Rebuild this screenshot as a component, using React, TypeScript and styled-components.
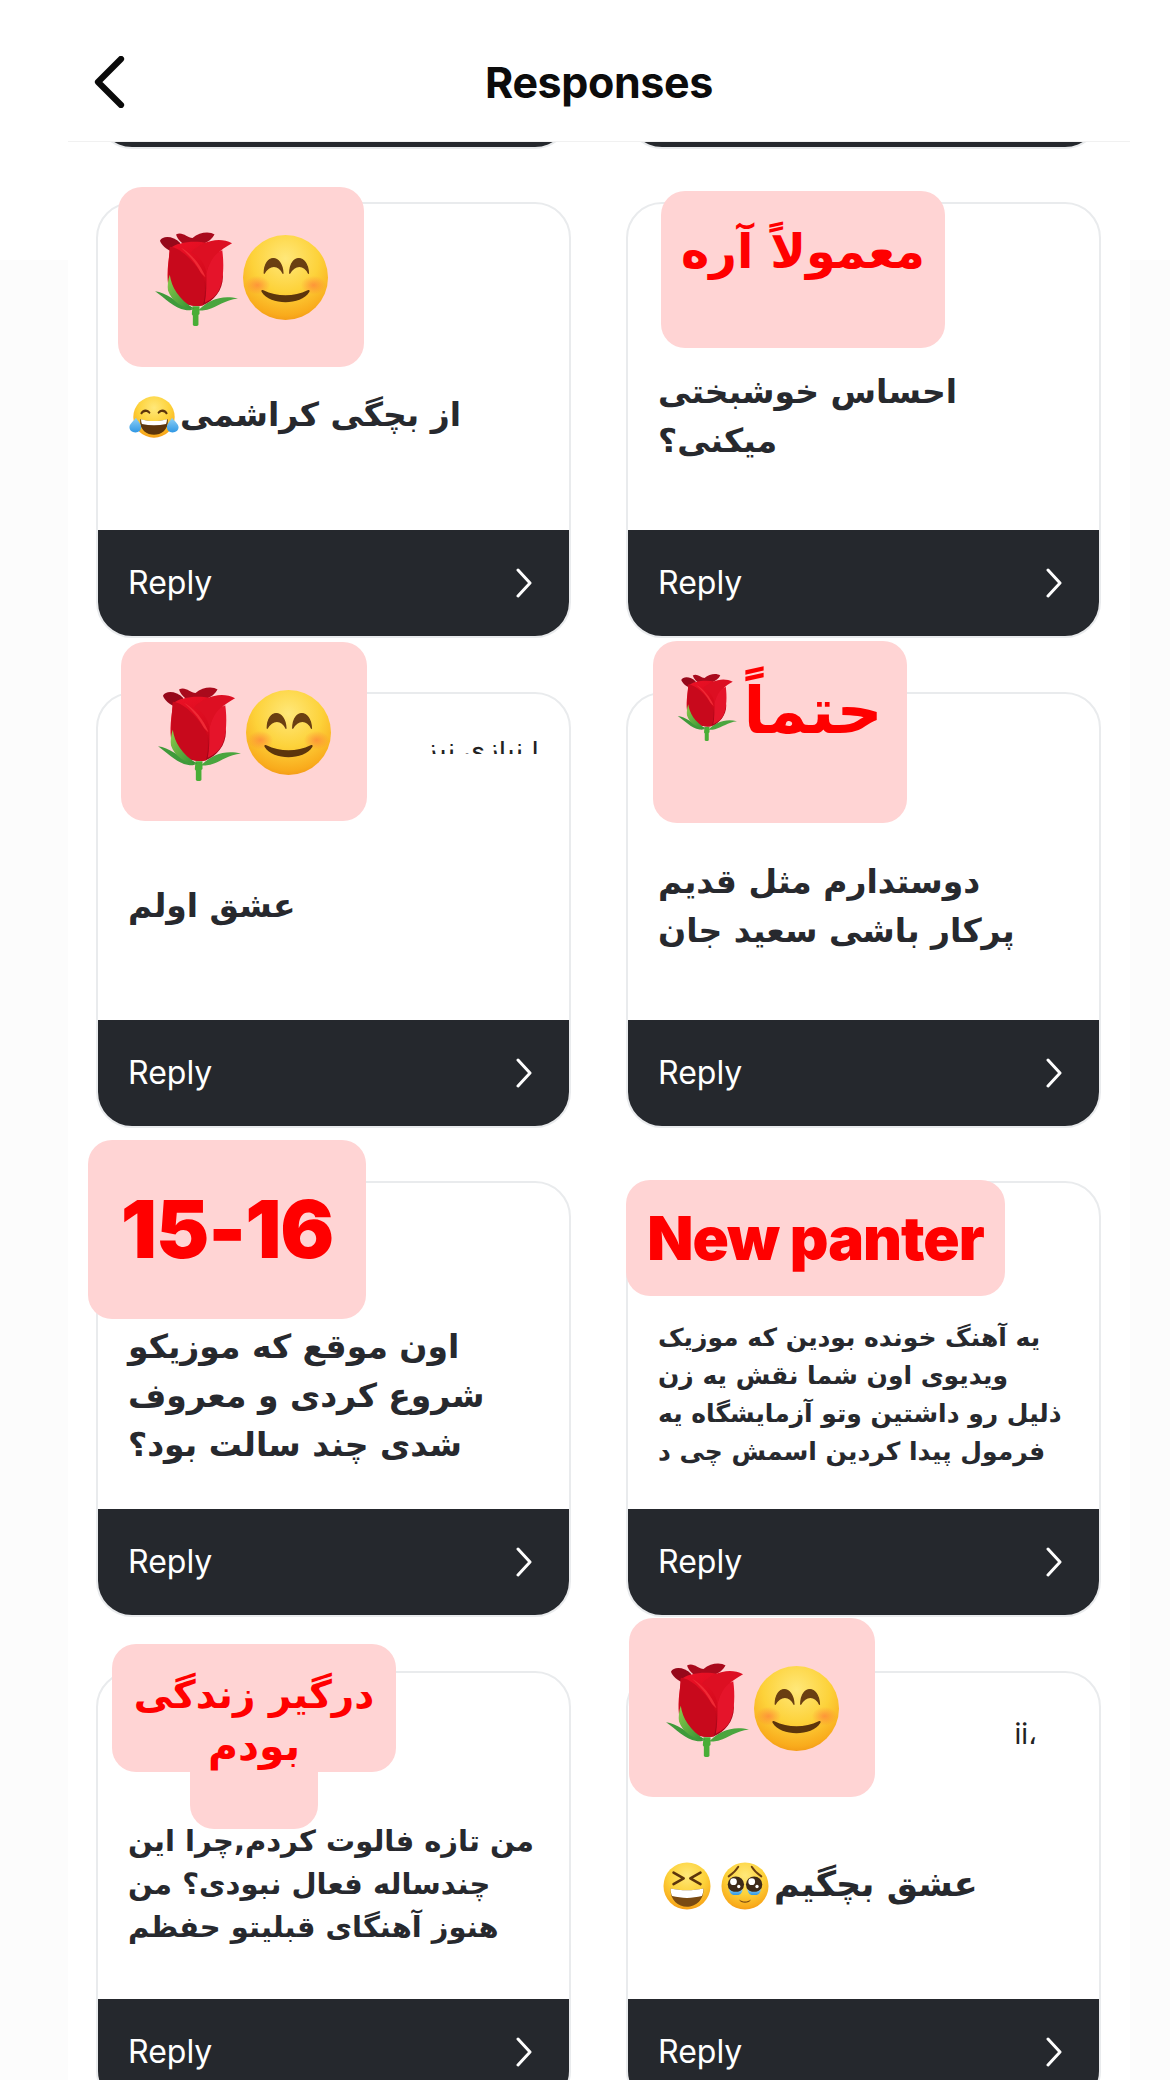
import React from "react";
import styled, { createGlobalStyle } from "styled-components";

const Global = createGlobalStyle`
  html, body { margin: 0; padding: 0; background: #fff; }
  body { font-family: "Inter", "DejaVu Sans", sans-serif; }
`;

const Page = styled.div`
  width: 1170px;
  height: 2080px;
  overflow: hidden;
  background: linear-gradient(#fff 260px, #fcfcfc 260px);
`;

const Column = styled.main`
  margin: 0 40px 0 68px;
  background: #fff;
  height: 2080px;
`;

const Header = styled.header`
  height: 141px;
  box-sizing: content-box;
  display: grid;
  grid-template-columns: 1fr auto 1fr;
  align-items: center;
  padding: 0 26px;
  border-bottom: 1px solid #f1f1f1;
  background: #fff;
  position: relative;
  z-index: 3;
`;

const BackIcon = styled.svg`
  width: 31px;
  height: 52px;
  fill: none;
  stroke: #0a0a0a;
  stroke-width: 6.2;
  stroke-linecap: round;
  stroke-linejoin: round;
  margin-top: 23px;
`;

const Title = styled.h1`
  margin: 23px 0 0;
  font: 700 43px/1 "Inter", sans-serif;
  letter-spacing: -0.4px;
  color: #0c0c0c;
`;

const Scroller = styled.div`
  height: 1938px;
  overflow: hidden;
`;

const Grid = styled.div`
  display: grid;
  grid-template-columns: 475px 475px;
  grid-auto-rows: 436px;
  column-gap: 55px;
  row-gap: 53.5px;
  padding: 0 0 0 28px;
  margin-top: -429.5px;
`;

const Card = styled.article`
  position: relative;
  display: flex;
  flex-direction: column;
  box-sizing: border-box;
  background: #fff;
  border: 2px solid #e9ebed;
  border-radius: 36px;
`;

const Body = styled.div`
  flex: 1;
  display: flex;
  align-items: center;
  padding: 98px 30px 0;
  min-height: 0;
`;

const Question = styled.p<{ $size: number; $line: number }>`
  margin: 0;
  width: 100%;
  text-align: left;
  font-family: "DejaVu Sans", sans-serif;
  font-weight: 700;
  font-size: ${(p) => p.$size}px;
  line-height: ${(p) => p.$line}px;
  color: #27292e;
`;

const Line = styled.span`
  display: block;
  white-space: nowrap;
`;

const Footer = styled.div`
  height: 106px;
  flex: none;
  display: flex;
  align-items: center;
  justify-content: space-between;
  padding: 0 36px 0 30px;
  background: #25282d;
  border-radius: 0 0 34px 34px;
`;

const ReplyLabel = styled.span`
  font: 400 32px/1 "Inter", sans-serif;
  color: #fff;
`;

const Chevron = styled.svg`
  width: 18px;
  height: 30px;
  fill: none;
  stroke: #fff;
  stroke-width: 3;
  stroke-linecap: round;
  stroke-linejoin: round;
`;

const Sticker = styled.div<{ $x: number; $y: number; $w: number; $h: number }>`
  position: absolute;
  left: ${(p) => p.$x}px;
  top: ${(p) => p.$y}px;
  width: ${(p) => p.$w}px;
  height: ${(p) => p.$h}px;
  background: #ffd4d4;
  border-radius: 24px;
  z-index: 2;
`;

const EmojiSticker = styled(Sticker)`
  display: flex;
  justify-content: center;
  align-items: flex-start;
  gap: 5px;
  padding-top: 44px;
  box-sizing: border-box;
`;

const TextSticker = styled(Sticker)<{ $top: number; $size: number; $latin?: boolean }>`
  box-sizing: border-box;
  padding-top: ${(p) => p.$top}px;
  text-align: center;
  color: #ff0000;
  white-space: nowrap;
  font-family: ${(p) => (p.$latin ? '"Inter", sans-serif' : '"DejaVu Sans", sans-serif')};
  font-weight: ${(p) => (p.$latin ? 900 : 700)};
  font-size: ${(p) => p.$size}px;
  line-height: 1;
  letter-spacing: ${(p) => (p.$latin ? "-1px" : "0")};
`;

const RoseTextSticker = styled(TextSticker)`
  display: flex;
  justify-content: center;
  align-items: flex-start;
  gap: 6px;
`;

const RoseSlot = styled.span`
  display: flex;
  margin-top: -6px;
`;

const StackedSticker = styled.div`
  position: absolute;
  left: 14px;
  top: -29px;
  width: 284px;
  z-index: 2;
  display: flex;
  flex-direction: column;
  align-items: center;
  color: #ff0000;
  font: 700 39px/40px "DejaVu Sans", sans-serif;
  white-space: nowrap;
`;

const StackedLineOne = styled.div`
  width: 284px;
  height: 128px;
  box-sizing: border-box;
  padding-top: 31px;
  text-align: center;
  background: #ffd4d4;
  border-radius: 24px;
`;

const StackedLineTwo = styled.div`
  width: 128px;
  height: 103px;
  margin-top: -46px;
  font-size: 41px;
  text-align: center;
  background: #ffd4d4;
  border-radius: 0 0 24px 24px;
`;

const Leftover = styled.div<{ $x: number; $y: number; $w: number; $h: number }>`
  position: absolute;
  left: ${(p) => p.$x}px;
  top: ${(p) => p.$y}px;
  width: ${(p) => p.$w}px;
  height: ${(p) => p.$h}px;
  overflow: hidden;
  display: flex;
  justify-content: flex-end;
  align-items: flex-start;
  font: 400 28px/38px "Inter", "DejaVu Sans", sans-serif;
  color: #222;
  white-space: nowrap;
`;

const TailClip = styled.span<{ $lift: number }>`
  margin-top: ${(p) => -p.$lift}px;
`;

const Defs = styled.svg`
  position: absolute;
  width: 0;
  height: 0;
`;

const InlineEmoji = styled.svg<{ $size: number; $gap?: number }>`
  width: ${(p) => p.$size}px;
  height: ${(p) => p.$size}px;
  vertical-align: middle;
  margin: 0 ${(p) => p.$gap ?? 1}px;
  overflow: visible;
`;

const RoseSvg = styled.svg<{ $w: number }>`
  width: ${(p) => p.$w}px;
  height: ${(p) => (p.$w * 275) / 240}px;
  flex: none;
`;

const SmileSvg = styled.svg<{ $size: number }>`
  width: ${(p) => p.$size}px;
  height: ${(p) => p.$size}px;
  flex: none;
  margin-top: 4px;
`;

/* Shared gradients for the hand-drawn emoji */
const SharedGradients = () => (
  <Defs aria-hidden="true">
    <defs>
      <radialGradient id="faceFill" cx="50%" cy="28%" r="78%">
        <stop offset="0%" stopColor="#ffe87a" />
        <stop offset="50%" stopColor="#fdd23a" />
        <stop offset="85%" stopColor="#f9ab1c" />
        <stop offset="100%" stopColor="#ef8f14" />
      </radialGradient>
      <radialGradient id="blush">
        <stop offset="0%" stopColor="#ff7a3c" stopOpacity="0.65" />
        <stop offset="100%" stopColor="#ff7a3c" stopOpacity="0" />
      </radialGradient>
      <linearGradient id="budFill" x1="0" y1="0" x2="0.4" y2="1">
        <stop offset="0%" stopColor="#ee1126" />
        <stop offset="70%" stopColor="#d30a1c" />
        <stop offset="100%" stopColor="#a00618" />
      </linearGradient>
      <linearGradient id="calyxFill" x1="0" y1="0" x2="1" y2="1">
        <stop offset="0%" stopColor="#8ecb4c" />
        <stop offset="100%" stopColor="#2f8f32" />
      </linearGradient>
      <linearGradient id="tearFill" x1="0" y1="0" x2="0" y2="1">
        <stop offset="0%" stopColor="#8fd0f6" />
        <stop offset="100%" stopColor="#2f97e4" />
      </linearGradient>
    </defs>
  </Defs>
);

const Rose = ({ width = 84 }: { width?: number }) => (
  <RoseSvg $w={width} viewBox="55 40 240 275" aria-hidden="true">
    <path d="M165 255h20v22l-3 3v28c0 5-16 5-16 0v-26l-3-4z" fill="#49ad36" />
    <path d="M58 212c30 2 62 32 107 50 4 2-8 6-20 4-34-6-58-34-87-54z" fill="#3f9a3a" />
    <path d="M295 233c-45-12-85 4-112 32-3 3 12 3 24 0 30-8 50-28 88-32z" fill="#4aa53e" />
    <path d="M72 68c8-16 38-14 58 6l-8 32C100 98 78 86 72 68z" fill="#96081a" />
    <path d="M118 50c17-10 32 9 47 10 20-18 50-20 63-10-13 25-48 36-78 36-15-10-28-22-32-36z" fill="#a90a1c" />
    <path d="M95 190c-5-40 5-80 5-100 30-25 100-25 140-5l12 85c0 40-27 70-57 82-25 6-65-2-85-27z" fill="url(#budFill)" />
    <path d="M160 102c30-32 80-47 118-27-28 15-63 40-73 85-5-30-25-50-45-58z" fill="#dd0f22" />
    <path d="M100 85c32 2 72 45 95 85 10 30 5 65 0 82-35 10-75-12-95-52-10-40 0-90 0-115z" fill="#c8091c" />
    <path d="M132 88c28 14 58 50 70 84-4-3-10-8-14-14-14-28-36-52-56-70z" fill="#ef2a35" />
    <path d="M205 160c10-40 30-60 45-65 5 35 5 85-10 115-10 20-30 30-40 35 5-25 5-55 5-85z" fill="#e5142a" />
    <path d="M100 165c5 35 25 70 70 97-35 0-65-22-75-52-2-12 0-30 5-45z" fill="url(#calyxFill)" />
  </RoseSvg>
);

const Smile = () => (
  <SmileSvg $size={85} viewBox="0 0 100 100" aria-hidden="true">
    <circle cx="50" cy="50" r="50" fill="url(#faceFill)" />
    <ellipse cx="17" cy="59" rx="15" ry="11" fill="url(#blush)" />
    <ellipse cx="83" cy="59" rx="15" ry="11" fill="url(#blush)" />
    <path d="M25 45c0-23 21-23 22 0-5-11-16-11-22 0z" fill="#6a3f12" stroke="#6a3f12" strokeWidth="1.5" strokeLinejoin="round" />
    <path d="M55 45c0-23 21-23 22 0-5-11-16-11-22 0z" fill="#6a3f12" stroke="#6a3f12" strokeWidth="1.5" strokeLinejoin="round" />
    <path d="M24 65c16 8 36 8 52 0 2-1 3 0 2 2-10 16-46 16-56 0-1-2 0-3 2-2z" fill="#5c350c" />
  </SmileSvg>
);

const JoyTears = () => (
  <InlineEmoji $size={50} viewBox="-8 0 116 100" aria-hidden="true">
    <circle cx="50" cy="50" r="48" fill="url(#faceFill)" />
    <path d="M18 42c5-12 18-12 24-2l-3 3c-5-6-12-6-17 1zM58 40c6-10 19-10 24 2l-4 2c-5-7-12-7-17-1z" fill="#5c350c" />
    <path d="M18 55c20 6 44 6 64 0 2 26-16 36-32 36S16 81 18 55z" fill="#5c350c" />
    <path d="M20 55c18 6 42 6 60 0 0 5-1 8-2 11-18 4-38 4-56 0-1-3-2-6-2-11z" fill="#fff" />
    <path d="M8 52c5 8 12 14 12 22 0 7-5 12-13 12S-7 81-7 74c0-8 10-14 15-22z" fill="url(#tearFill)" />
    <path d="M92 52c-5 8-12 14-12 22 0 7 5 12 13 12s14-5 14-12c0-8-10-14-15-22z" fill="url(#tearFill)" />
  </InlineEmoji>
);

const Squint = () => (
  <InlineEmoji $size={48} $gap={5} viewBox="0 0 100 100" aria-hidden="true">
    <circle cx="50" cy="50" r="49" fill="url(#faceFill)" />
    <path d="M22 22l21 12-21 12M78 22L57 34l21 12" fill="none" stroke="#5c350c" strokeWidth="5.5" strokeLinecap="round" strokeLinejoin="round" />
    <path d="M16 55c22 5 46 5 68 0 2 24-16 38-34 38S14 79 16 55z" fill="#7a4a12" />
    <path d="M16 55c22 5 46 5 68 0 0 7-1 11-3 16-20 5-42 5-62 0-2-5-3-9-3-16z" fill="#fff" />
  </InlineEmoji>
);

const Pleading = () => (
  <InlineEmoji $size={48} $gap={5} viewBox="0 0 100 100" aria-hidden="true">
    <circle cx="50" cy="50" r="49" fill="url(#faceFill)" />
    <path d="M16 30c6-4 14-10 20-20M84 30c-6-4-14-10-20-20" fill="none" stroke="#6a3f12" strokeWidth="4" strokeLinecap="round" />
    <circle cx="31" cy="47" r="17" fill="#3e2a18" />
    <circle cx="69" cy="47" r="17" fill="#3e2a18" />
    <circle cx="26" cy="41" r="7" fill="#fff" />
    <circle cx="64" cy="41" r="7" fill="#fff" />
    <circle cx="37" cy="51" r="3.5" fill="#fff" />
    <circle cx="75" cy="51" r="3.5" fill="#fff" />
    <path d="M17 56c6 8 22 8 28 0-1 10-6 13-14 13s-13-3-14-13zM55 56c6 8 22 8 28 0-1 10-6 13-14 13s-13-3-14-13z" fill="url(#tearFill)" />
    <path d="M38 78c7 6 17 6 24 0-2 9-22 9-24 0z" fill="#7a4a12" />
  </InlineEmoji>
);

const RoseAndSmile = () => (
  <>
    <Rose />
    <Smile />
  </>
);

const Reply = () => (
  <Footer>
    <ReplyLabel>Reply</ReplyLabel>
    <Chevron viewBox="0 0 18 30" aria-hidden="true">
      <path d="M3 2l12 13L3 28" />
    </Chevron>
  </Footer>
);

type Prompt = { size: number; line: number; lines: React.ReactNode[] };

const QuestionBlock = ({ size, line, lines }: Prompt) => (
  <Body>
    <Question dir="rtl" $size={size} $line={line}>
      {lines.map((l, i) => (
        <Line key={i}>{l}</Line>
      ))}
    </Question>
  </Body>
);

export default function App() {
  return (
    <Page>
      <Global />
      <SharedGradients />
      <Column>
        <Header>
          <BackIcon viewBox="0 0 31 52" aria-hidden="true">
            <path d="M27 3L4 26l23 23" />
          </BackIcon>
          <Title>Responses</Title>
          <span />
        </Header>
        <Scroller>
          <Grid>
            <Card>
              <Body />
              <Reply />
            </Card>
            <Card>
              <Body />
              <Reply />
            </Card>

            <Card>
              <EmojiSticker $x={20} $y={-17} $w={246} $h={180}>
                <RoseAndSmile />
              </EmojiSticker>
              <QuestionBlock size={33} line={49} lines={[<>از بچگی کراشمی<JoyTears /></>]} />
              <Reply />
            </Card>
            <Card>
              <TextSticker $x={33} $y={-13} $w={284} $h={157} $top={36} $size={48}>
                معمولاً آره
              </TextSticker>
              <QuestionBlock size={33} line={49} lines={["احساس خوشبختی", "میکنی؟"]} />
              <Reply />
            </Card>

            <Card>
              <EmojiSticker $x={23} $y={-52} $w={246} $h={179}>
                <RoseAndSmile />
              </EmojiSticker>
              <Leftover $x={317} $y={47} $w={124} $h={13}>
                <TailClip $lift={12}>ا نیازی نیز</TailClip>
              </Leftover>
              <QuestionBlock size={33} line={49} lines={["عشق اولم"]} />
              <Reply />
            </Card>
            <Card>
              <RoseTextSticker dir="rtl" $x={25} $y={-53} $w={254} $h={182} $top={38} $size={64}>
                حتماً
                <RoseSlot>
                  <Rose width={60} />
                </RoseSlot>
              </RoseTextSticker>
              <QuestionBlock size={33} line={49} lines={["دوستدارم مثل قدیم", "پرکار باشی سعید جان"]} />
              <Reply />
            </Card>

            <Card>
              <TextSticker $x={-10} $y={-43} $w={278} $h={179} $top={49} $size={80} $latin>
                15-16
              </TextSticker>
              <QuestionBlock size={33} line={49} lines={["اون موقع که موزیکو", "شروع کردی و معروف", "شدی چند سالت بود؟"]} />
              <Reply />
            </Card>
            <Card>
              <TextSticker $x={-2} $y={-3} $w={379} $h={116} $top={28} $size={60} $latin>
                New panter
              </TextSticker>
              <QuestionBlock
                size={25}
                line={38}
                lines={["یه آهنگ خونده بودین که موزیک", "ویدیوی اون شما نقش یه زن", "ذلیل رو داشتین وتو آزمایشگاه یه", "فرمول پیدا کردین اسمش چی د"]}
              />
              <Reply />
            </Card>

            <Card>
              <StackedSticker>
                <StackedLineOne>درگیر زندگی</StackedLineOne>
                <StackedLineTwo>بودم</StackedLineTwo>
              </StackedSticker>
              <QuestionBlock size={29} line={43} lines={["من تازه فالوت کردم,چرا این", "چندساله فعال نبودی؟ من", "هنوز آهنگای قبلیتو حفظم"]} />
              <Reply />
            </Card>
            <Card>
              <EmojiSticker $x={1} $y={-55} $w={246} $h={179}>
                <RoseAndSmile />
              </EmojiSticker>
              <Leftover $x={387} $y={49} $w={22} $h={27}>
                <TailClip $lift={7}>ii،</TailClip>
              </Leftover>
              <QuestionBlock size={35} line={49} lines={[<>عشق بچگیم<Pleading /><Squint /></>]} />
              <Reply />
            </Card>
          </Grid>
        </Scroller>
      </Column>
    </Page>
  );
}
